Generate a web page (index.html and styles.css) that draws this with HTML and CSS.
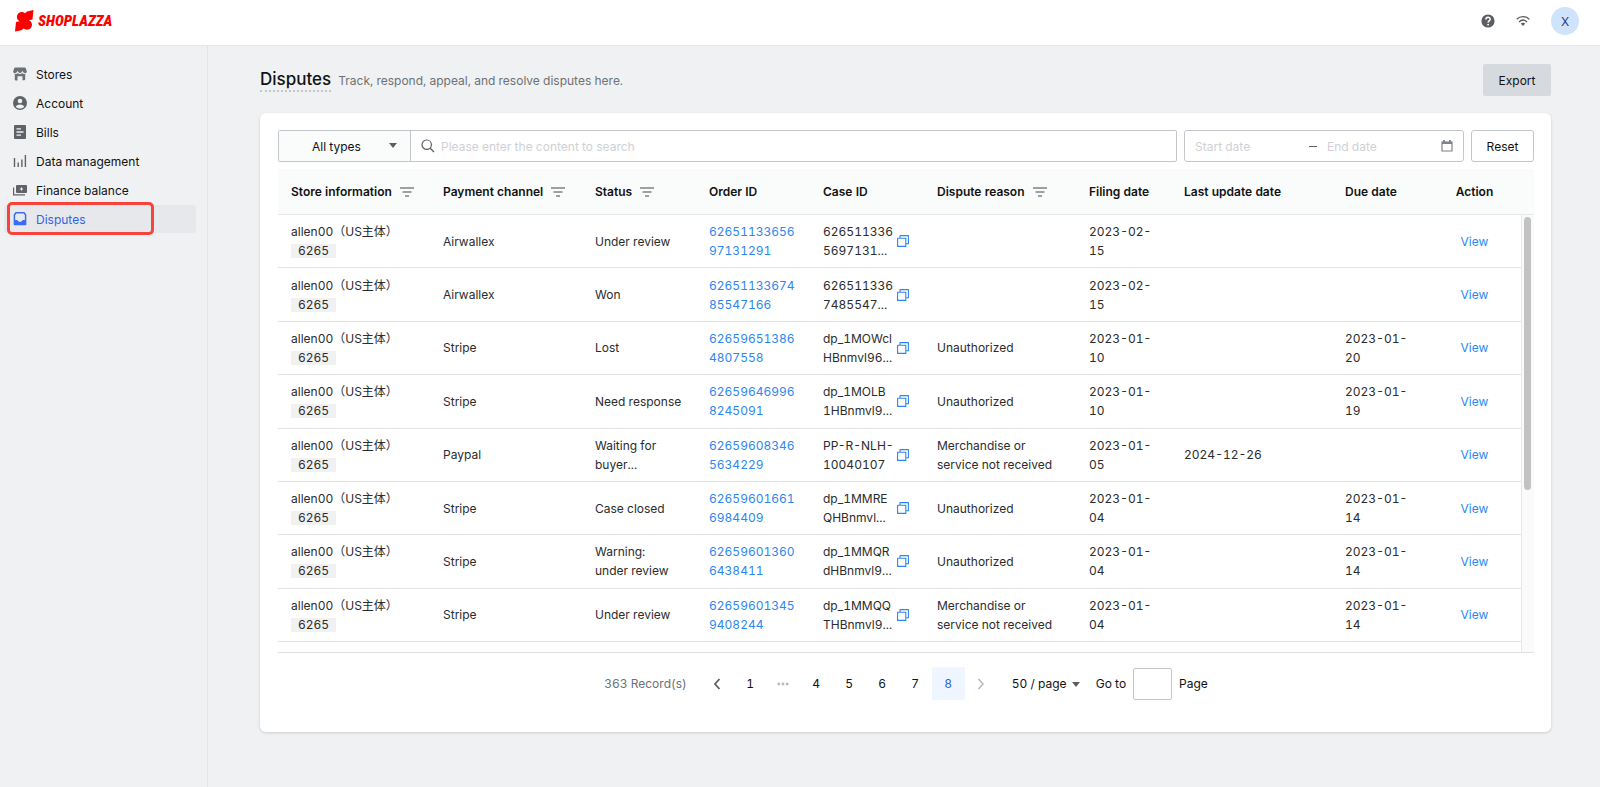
FILE: index.html
```html
<!DOCTYPE html>
<html lang="en">
<head>
    <meta charset="UTF-8">
    <meta name="viewport" content="width=device-width, initial-scale=1.0">
    <title>Disputes - Shoplazza</title>
    <link rel="stylesheet" href="styles.css">
</head>
<body>
    <svg class="sprite" aria-hidden="true">
        <symbol id="filter" viewBox="0 0 14 10">
            <path d="M0 1h14M2.5 5h9M5 9h4" fill="none" stroke="currentColor" stroke-width="1.3"/>
        </symbol>
        <symbol id="copy" viewBox="0 0 12 12">
            <path d="M.6 3.2h8.2v8.2H.6zM3 3V.6h8.4v8.2H9" fill="none" stroke="currentColor" stroke-width="1.1" stroke-linejoin="round"/>
        </symbol>
    </svg>

    <header class="topbar">
        <a class="logo" href="#" aria-label="Shoplazza">
            <svg class="logo-mark" viewBox="0 0 19 22">
                <path d="M18.500 0 17.500 9.500 13.800 10.300C17 11.500 18 15 16 17.800 14 20.300 10.500 20.200 8.500 18.600L6.500 20.200 0 21.500 1 12 4.600 11.200C1.500 9.500 1.200 6 3 3.700 5 1.500 8 1.500 10 3.200L12 1.500Z" fill="#fd0100"/>
            </svg>
            <span>SHOPLAZZA</span>
        </a>
        <div class="tools">
            <button aria-label="Help">
                <svg width="14" height="14" viewBox="0 0 14 14">
                    <circle cx="7" cy="7" r="6.600" fill="#5c5f62"/>
                    <path d="M4.900 5.500C4.900 2.500 9.200 2.600 9.200 5.300 9.200 6.900 7.100 6.900 7.100 8.600" fill="none" stroke="#fff" stroke-width="1.500"/>
                    <circle cx="7.100" cy="10.600" r=".95" fill="#fff"/>
                </svg>
            </button>
            <button aria-label="Network">
                <svg width="14" height="12" viewBox="0 0 14 12">
                    <path d="M.7 4.200C4.300.7 9.700.7 13.300 4.200M3 6.900C5.400 4.700 8.600 4.700 11 6.900" fill="none" stroke="#5c5f62" stroke-width="1.400"/>
                    <path d="M4.700 8.600C6.100 7.500 7.900 7.500 9.300 8.600L7 11Z" fill="#5c5f62"/>
                </svg>
            </button>
            <button class="avatar">X</button>
        </div>
    </header>

    <div class="layout">
        <nav class="sidebar">
            <a href="#">
                <svg viewBox="0 0 14 14"><path d="M2.500.5h9q1 0 1.400 1l.9 3q0 1.700-1.600 2v5.800q0 1-1 1H9.500V9.200h-5v4.300H2.800q-1 0-1-1V6.500Q.2 6.200.2 4.500l.9-3q.4-1 1.400-1Z" fill="#6d7175"/><path d="M1.800 6.500Q4 6.800 4.600 5 7 8.400 9.400 5 10 6.800 12.200 6.500" fill="none" stroke="#f0f1f3" stroke-width="1.100"/></svg>
                Stores
            </a>
            <a href="#">
                <svg viewBox="0 0 14 14"><circle cx="7" cy="7" r="7" fill="#5f6368"/><circle cx="7" cy="5" r="2.300" fill="#f0f1f3"/><path d="M2.700 10.800C4.500 7.700 9.500 7.700 11.300 10.800 9 13.200 5 13.200 2.700 10.800Z" fill="#f0f1f3"/></svg>
                Account
            </a>
            <a href="#">
                <svg viewBox="0 0 14 14"><rect x="1" width="12" height="14" rx="1" fill="#5f6368"/><path d="M3.500 3.800h4.500M3.500 7h7M3.500 10.200h4.500" stroke="#f0f1f3" stroke-width="1.300"/></svg>
                Bills
            </a>
            <a href="#">
                <svg viewBox="0 0 14 14"><path d="M1.500 4V13M5.200 8.500V13M8.900 5.500V13M12.400 1V13" stroke="#5f6368" stroke-width="1.400"/></svg>
                Data management
            </a>
            <a href="#">
                <svg viewBox="0 0 14 14"><rect x="3" y="2" width="11" height="8" rx="1" fill="#5f6368"/><path d="M.6 4.500v7.400H12" fill="none" stroke="#5f6368" stroke-width="1.200"/><path d="M8.500 4.400v3.200M6.900 6h3.200" stroke="#f0f1f3"/></svg>
                Finance balance
            </a>
            <a class="active" href="#">
                <svg viewBox="0 0 14 14"><path d="M2.800.8h8.400L12.600 3v9.500H1.400V3Z" fill="#e8e9ed" stroke="#3c6cf0" stroke-width="1.500" stroke-linejoin="round"/><path d="M1.400 8h3c.4 2.400 4.800 2.400 5.200 0h3v4.700H1.400Z" fill="#3c6cf0"/></svg>
                Disputes
                <span class="highlight"></span>
            </a>
        </nav>

        <main>
            <div class="page-head">
                <h1>Disputes</h1>
                <p>Track, respond, appeal, and resolve disputes here.</p>
                <button class="export">Export</button>
            </div>

            <section class="card">
                <form class="filters">
                    <div class="search-group">
                        <div class="type-select">
                            <select aria-label="Type">
                                <option>All types</option>
                            </select>
                        </div>
                        <label class="search">
                            <svg width="14" height="14" viewBox="0 0 14 14"><circle cx="5.700" cy="5.700" r="4.700" fill="none" stroke="#5c5f62" stroke-width="1.200"/><path d="M9.200 9.200 13 13" stroke="#5c5f62" stroke-width="1.300"/></svg>
                            <input type="text" placeholder="Please enter the content to search" aria-label="Search">
                        </label>
                    </div>
                    <div class="date-range">
                        <input type="text" placeholder="Start date" aria-label="Start date">
                        <span class="dash"></span>
                        <input type="text" placeholder="End date" aria-label="End date">
                        <svg width="12" height="12" viewBox="0 0 12 12"><path d="M1 2h10v9H1Z" fill="none" stroke="#7d8288" stroke-width="1.200"/><path d="M1 3h10M3 0v3M9 0v3" stroke="#7d8288" stroke-width="1.800"/></svg>
                    </div>
                    <button class="reset" type="reset">Reset</button>
                </form>

                <div class="table-area">
                    <div class="table-scroll">
                        <table>
                            <colgroup>
                                <col class="wide"><col class="wide"><col class="mid"><col class="mid"><col class="mid">
                                <col class="wide"><col class="narrow"><col class="update"><col class="narrow"><col class="narrow">
                            </colgroup>
                            <thead>
                                <tr>
                                    <th>Store information <svg><use href="#filter"/></svg></th>
                                    <th>Payment channel <svg><use href="#filter"/></svg></th>
                                    <th>Status <svg><use href="#filter"/></svg></th>
                                    <th>Order ID</th>
                                    <th>Case ID</th>
                                    <th>Dispute reason <svg><use href="#filter"/></svg></th>
                                    <th>Filing date</th>
                                    <th>Last update date</th>
                                    <th>Due date</th>
                                    <th class="action">Action</th>
                                </tr>
                            </thead>
                            <tbody>
                                <tr>
                                    <td>allen00（US主体）<br><span class="tag">6265</span></td>
                                    <td>Airwallex</td>
                                    <td class="status">Under review</td>
                                    <td class="order"><a href="#">6265113365697131291</a></td>
                                    <td><div class="case"><span>626511336<br>5697131...</span><button aria-label="Copy"><svg><use href="#copy"/></svg></button></div></td>
                                    <td></td>
                                    <td>2023-02-15</td>
                                    <td></td>
                                    <td></td>
                                    <td class="action"><a href="#">View</a></td>
                                </tr>
                                <tr>
                                    <td>allen00（US主体）<br><span class="tag">6265</span></td>
                                    <td>Airwallex</td>
                                    <td class="status">Won</td>
                                    <td class="order"><a href="#">6265113367485547166</a></td>
                                    <td><div class="case"><span>626511336<br>7485547...</span><button aria-label="Copy"><svg><use href="#copy"/></svg></button></div></td>
                                    <td></td>
                                    <td>2023-02-15</td>
                                    <td></td>
                                    <td></td>
                                    <td class="action"><a href="#">View</a></td>
                                </tr>
                                <tr>
                                    <td>allen00（US主体）<br><span class="tag">6265</span></td>
                                    <td>Stripe</td>
                                    <td class="status">Lost</td>
                                    <td class="order"><a href="#">626596513864807558</a></td>
                                    <td><div class="case"><span>dp_1MOWcl<br>HBnmvl96...</span><button aria-label="Copy"><svg><use href="#copy"/></svg></button></div></td>
                                    <td>Unauthorized</td>
                                    <td>2023-01-10</td>
                                    <td></td>
                                    <td>2023-01-20</td>
                                    <td class="action"><a href="#">View</a></td>
                                </tr>
                                <tr>
                                    <td>allen00（US主体）<br><span class="tag">6265</span></td>
                                    <td>Stripe</td>
                                    <td class="status">Need response</td>
                                    <td class="order"><a href="#">626596469968245091</a></td>
                                    <td><div class="case"><span>dp_1MOLB<br>1HBnmvl9...</span><button aria-label="Copy"><svg><use href="#copy"/></svg></button></div></td>
                                    <td>Unauthorized</td>
                                    <td>2023-01-10</td>
                                    <td></td>
                                    <td>2023-01-19</td>
                                    <td class="action"><a href="#">View</a></td>
                                </tr>
                                <tr>
                                    <td>allen00（US主体）<br><span class="tag">6265</span></td>
                                    <td>Paypal</td>
                                    <td class="status">Waiting for<br>buyer...</td>
                                    <td class="order"><a href="#">626596083465634229</a></td>
                                    <td><div class="case"><span>PP-R-NLH-<br>10040107</span><button aria-label="Copy"><svg><use href="#copy"/></svg></button></div></td>
                                    <td>Merchandise or service not received</td>
                                    <td>2023-01-05</td>
                                    <td>2024-12-26</td>
                                    <td></td>
                                    <td class="action"><a href="#">View</a></td>
                                </tr>
                                <tr>
                                    <td>allen00（US主体）<br><span class="tag">6265</span></td>
                                    <td>Stripe</td>
                                    <td class="status">Case closed</td>
                                    <td class="order"><a href="#">626596016616984409</a></td>
                                    <td><div class="case"><span>dp_1MMRE<br>QHBnmvl...</span><button aria-label="Copy"><svg><use href="#copy"/></svg></button></div></td>
                                    <td>Unauthorized</td>
                                    <td>2023-01-04</td>
                                    <td></td>
                                    <td>2023-01-14</td>
                                    <td class="action"><a href="#">View</a></td>
                                </tr>
                                <tr>
                                    <td>allen00（US主体）<br><span class="tag">6265</span></td>
                                    <td>Stripe</td>
                                    <td class="status">Warning:<br>under review</td>
                                    <td class="order"><a href="#">626596013606438411</a></td>
                                    <td><div class="case"><span>dp_1MMQR<br>dHBnmvl9...</span><button aria-label="Copy"><svg><use href="#copy"/></svg></button></div></td>
                                    <td>Unauthorized</td>
                                    <td>2023-01-04</td>
                                    <td></td>
                                    <td>2023-01-14</td>
                                    <td class="action"><a href="#">View</a></td>
                                </tr>
                                <tr>
                                    <td>allen00（US主体）<br><span class="tag">6265</span></td>
                                    <td>Stripe</td>
                                    <td class="status">Under review</td>
                                    <td class="order"><a href="#">626596013459408244</a></td>
                                    <td><div class="case"><span>dp_1MMQQ<br>THBnmvl9...</span><button aria-label="Copy"><svg><use href="#copy"/></svg></button></div></td>
                                    <td>Merchandise or service not received</td>
                                    <td>2023-01-04</td>
                                    <td></td>
                                    <td>2023-01-14</td>
                                    <td class="action"><a href="#">View</a></td>
                                </tr>
                            </tbody>
                        </table>
                    </div>
                    <div class="scroll-col">
                        <div class="scroll-head"></div>
                        <div class="scroll-track"><div class="scroll-thumb"></div></div>
                    </div>
                </div>

                <div class="pagination">
                    <span class="total">363 Record(s)</span>
                    <div class="pages">
                        <button aria-label="Previous page"><svg width="8" height="12" viewBox="0 0 8 12"><path d="M6.500 1 2 6l4.500 5" fill="none" stroke="#5c5f62" stroke-width="1.800"/></svg></button>
                        <button>1</button>
                        <button aria-label="More pages"><svg width="12" height="4" viewBox="0 0 12 4" fill="#b5b9be"><circle cx="1.800" cy="2" r="1.400"/><circle cx="6" cy="2" r="1.400"/><circle cx="10.200" cy="2" r="1.400"/></svg></button>
                        <button>4</button>
                        <button>5</button>
                        <button>6</button>
                        <button>7</button>
                        <button class="current">8</button>
                        <button aria-label="Next page"><svg width="8" height="12" viewBox="0 0 8 12"><path d="M1.500 1 6 6l-4.500 5" fill="none" stroke="#b5b9be" stroke-width="1.500"/></svg></button>
                    </div>
                    <div class="page-size">
                        <select aria-label="Page size">
                            <option>50 / page</option>
                        </select>
                    </div>
                    <label class="goto">Go to <input type="text"> Page</label>
                </div>
            </section>
        </main>
    </div>
</body>
</html>
```
FILE: styles.css
```css
* {
    box-sizing: border-box;
}
body {
    margin: 0;
    min-height: 100vh;
    display: flex;
    flex-direction: column;
    background-color: #f0f1f3;
    color: #111213;
    font-family: Inter, "Noto Sans CJK SC", sans-serif;
    font-size: 12px;
    line-height: 19px;
    font-variant-numeric: tabular-nums;
}
button, input, select {
    font: inherit;
    color: inherit;
}
button {
    padding: 0;
    border: 0;
    background: none;
    cursor: pointer;
}
a {
    color: #2c87f0;
    text-decoration: none;
}
svg {
    flex: none;
}
.sprite {
    display: none;
}

/* top bar */
.topbar {
    display: flex;
    justify-content: space-between;
    align-items: center;
    height: 46px;
    padding: 0 21px 3px 15px;
    background-color: #fff;
    border-bottom: 1px solid #e6e7e9;
}
.logo {
    display: flex;
    align-items: center;
    gap: 4px;
    color: #fd0100;
    font-family: "Roboto Condensed", Roboto, "Liberation Sans", sans-serif;
    font-size: 15px;
    font-weight: 900;
    font-style: italic;
}
.logo-mark {
    width: 19px;
    height: 22px;
}
.tools {
    display: flex;
    align-items: center;
    gap: 21px;
}
.tools button {
    display: flex;
}
.tools .avatar {
    width: 28px;
    height: 28px;
    align-items: center;
    justify-content: center;
    border-radius: 50%;
    background-color: #cfe4fa;
    color: #2b3a8c;
}

/* side menu */
.layout {
    display: flex;
    flex: 1;
}
.sidebar {
    width: 208px;
    flex: none;
    padding: 14px 11px 14px 4px;
    border-right: 1px solid #e4e5e8;
    display: flex;
    flex-direction: column;
    gap: 1px;
}
.sidebar a {
    position: relative;
    display: flex;
    align-items: center;
    gap: 9px;
    height: 28px;
    padding: 0 9px;
    border-radius: 3px;
    color: #111213;
}
.sidebar svg {
    width: 14px;
    height: 14px;
}
.sidebar .active {
    background-color: #e7e8ec;
    color: #3562e8;
}
.highlight {
    position: absolute;
    top: -3px;
    bottom: -2px;
    left: 3px;
    width: 147px;
    border: 3px solid #f7433b;
    border-radius: 5px;
}

/* content */
main {
    flex: 1;
    min-width: 0;
    padding: 18px 49px 54px 52px;
}
.page-head {
    display: flex;
    align-items: center;
    gap: 7px;
    margin-bottom: 17px;
}
h1 {
    margin: 0;
    border-bottom: 2px dotted #c4c6ca;
    font-size: 17px;
    font-weight: 500;
    line-height: 22px;
}
.page-head p {
    margin: 0;
    color: #6d7175;
}
.export {
    width: 68px;
    height: 32px;
    margin-left: auto;
    border-radius: 2px;
    background-color: #d6dadf;
}
.card {
    padding: 17px 17px 32px 18px;
    border-radius: 6px;
    background-color: #fff;
    box-shadow: 0 1px 3px rgba(0, 0, 0, 0.15);
}

/* filters */
.filters {
    display: flex;
    gap: 7px;
    margin-bottom: 7px;
}
.search-group {
    display: flex;
    flex: 1;
    height: 32px;
    border: 1px solid #c3c6ca;
    border-radius: 2px;
}
.type-select {
    position: relative;
    width: 132px;
    background-color: #fafbfb;
    border-right: 1px solid #c3c6ca;
}
.type-select select {
    width: 100%;
    height: 100%;
    padding: 0 32px 0 16px;
    border: 0;
    background: none;
    appearance: none;
    text-align: center;
    text-align-last: center;
}
.type-select::after, .page-size::after {
    content: "";
    position: absolute;
    right: 13px;
    top: 12px;
    border: 4px solid transparent;
    border-top: 5px solid #5c5f62;
    border-bottom: 0;
    pointer-events: none;
}
.search {
    display: flex;
    flex: 1;
    align-items: center;
    gap: 6px;
    padding: 0 10px;
}
.search input, .date-range input {
    width: 100%;
    min-width: 0;
    padding: 0;
    border: 0;
    background: none;
}
::placeholder {
    color: #cfd1d4;
}
.date-range {
    display: flex;
    align-items: center;
    width: 280px;
    gap: 10px;
    padding: 0 10px;
    border: 1px solid #c3c6ca;
    border-radius: 3px;
}
.dash {
    flex: none;
    width: 8px;
    height: 1px;
    background-color: #5c5f62;
}
.reset {
    width: 63px;
    border: 1px solid #c3c6ca;
    border-radius: 3px;
}

/* table */
.table-area {
    display: flex;
    height: 484px;
    border-bottom: 1px solid #dfe1e4;
}
.table-scroll {
    flex: 1;
    overflow: hidden;
}
table {
    width: 100%;
    height: 473px;
    table-layout: fixed;
    border-collapse: separate;
    border-spacing: 0;
}
.wide {
    width: 152px;
}
.mid {
    width: 114px;
}
.narrow {
    width: 95px;
}
.update {
    width: 161px;
}
th {
    height: 46px;
    padding: 0 0 0 13px;
    background-color: #fafcfb;
    border-bottom: 1px solid #e6e8ea;
    font-weight: 600;
    text-align: left;
    white-space: nowrap;
}
th svg {
    width: 14px;
    height: 10px;
    margin-left: 5px;
    color: #7d8288;
    vertical-align: -1px;
}
td {
    padding: 7px 14px 7px 13px;
    border-bottom: 1px solid #e1e3e5;
    color: #2a2c2e;
}
.tag {
    display: inline-block;
    padding: 0 7px;
    background-color: #f1f1f1;
    line-height: 14px;
}
.status {
    padding-right: 7px;
}
.order {
    word-break: break-all;
}
.case {
    display: flex;
    align-items: center;
    gap: 4px;
    white-space: nowrap;
}
.case span {
    width: 70px;
}
.case button {
    display: flex;
    color: #2c87f0;
}
.case svg {
    width: 12px;
    height: 12px;
}
.action {
    padding: 0;
    text-align: center;
}
.scroll-col {
    display: flex;
    flex-direction: column;
    width: 13px;
}
.scroll-head {
    height: 46px;
    background-color: #fafcfb;
    border-bottom: 1px solid #e6e8ea;
}
.scroll-track {
    flex: 1;
    padding: 2px 3px 2px 2px;
    background-color: #fafafa;
    border-left: 1px solid #e8e8e8;
}
.scroll-thumb {
    height: 63%;
    border-radius: 4px;
    background-color: #c2c2c2;
}

/* pagination */
.pagination {
    display: flex;
    justify-content: center;
    align-items: center;
    margin-top: 14px;
}
.total {
    margin-right: 14px;
    color: #6d7175;
}
.pages {
    display: flex;
}
.pages button {
    display: flex;
    align-items: center;
    justify-content: center;
    width: 33px;
    height: 33px;
    border-radius: 2px;
}
.pages .current {
    background-color: #eff6ff;
    color: #2c62d6;
}
.page-size {
    position: relative;
    width: 82px;
    padding-left: 14px;
}
.page-size select {
    width: 100%;
    padding: 0;
    border: 0;
    background: none;
    appearance: none;
}
.page-size::after {
    top: 8px;
    right: 0;
}
.goto {
    display: flex;
    align-items: center;
    gap: 7px;
    margin-left: 16px;
}
.goto input {
    width: 39px;
    height: 32px;
    padding: 0 6px;
    border: 1px solid #c3c6ca;
    border-radius: 2px;
}
```
